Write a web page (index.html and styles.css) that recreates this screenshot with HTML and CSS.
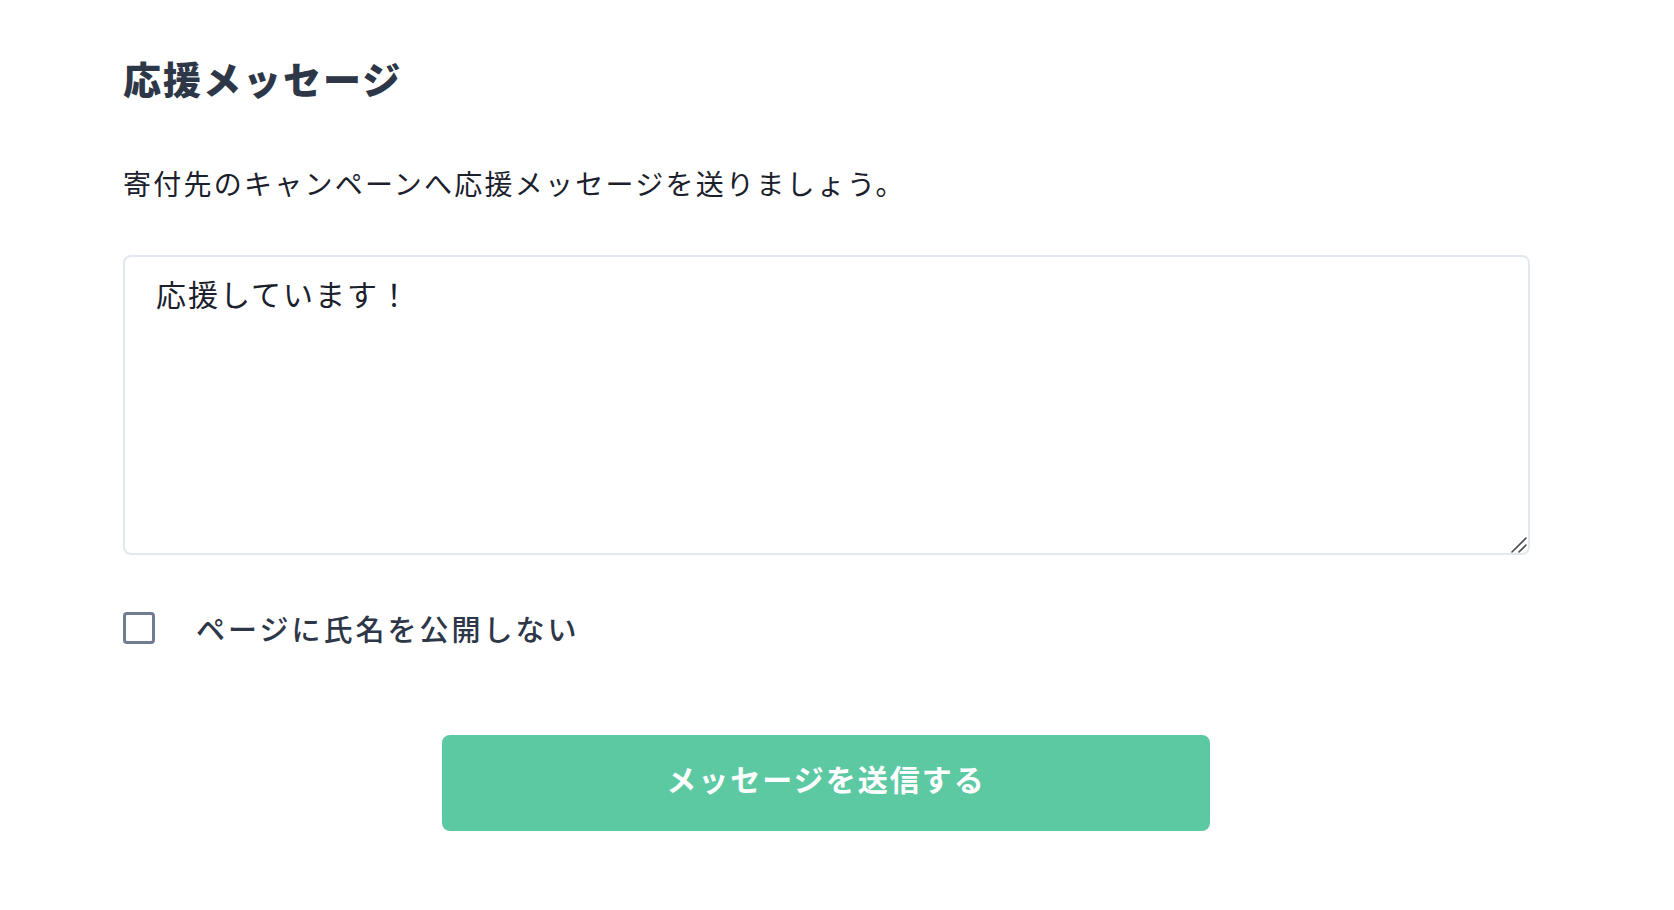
FILE: index.html
```html
<!DOCTYPE html>
<html lang="ja">
<head>
<meta charset="utf-8">
<title>応援メッセージ</title>
<link rel="stylesheet" href="styles.css">
</head>
<body>
<main class="page">
  <h1 class="title">応援メッセージ</h1>
  <p class="lead">寄付先のキャンペーンへ応援メッセージを送りましょう。</p>
  <div class="field">
    <textarea class="message">応援しています！</textarea>
    <svg class="grip" width="18" height="18" viewBox="0 0 18 18" aria-hidden="true">
      <line x1="3" y1="17" x2="17" y2="3" stroke="#4a4a4a" stroke-width="1.6" stroke-linecap="round"/>
      <line x1="10" y1="17" x2="17" y2="10" stroke="#4a4a4a" stroke-width="1.6" stroke-linecap="round"/>
    </svg>
  </div>
  <label class="check-row">
    <input type="checkbox" class="check">
    <span class="check-label">ページに氏名を公開しない</span>
  </label>
  <button class="submit" type="button">メッセージを送信する</button>
</main>
</body>
</html>
```

FILE: styles.css
```css
html, body {
  margin: 0;
  padding: 0;
  background: #ffffff;
}

body {
  font-family: "Noto Sans CJK JP", "Noto Sans", sans-serif;
  color: #1a202c;
}

.page {
  width: 1407px;
  padding: 55px 0 0 123px;
  display: flex;
  flex-direction: column;
  align-items: flex-start;
}

.title {
  margin: 0;
  font-size: 38px;
  line-height: 46px;
  font-weight: 900;
  letter-spacing: 2px;
  color: #2d3748;
}

.lead {
  margin: 62px 0 0;
  font-size: 28px;
  line-height: 40px;
  letter-spacing: 2.25px;
  color: #1a202c;
}

.field {
  position: relative;
  margin: 52px 0 0;
  width: 1407px;
  height: 300px;
}

.message {
  box-sizing: border-box;
  display: block;
  margin: 0;
  width: 100%;
  height: 100%;
  padding: 14px 31px;
  border: 2px solid #e2e8f0;
  border-radius: 8px;
  font-family: "Noto Sans CJK JP", "Noto Sans", sans-serif;
  font-size: 30px;
  line-height: 45px;
  letter-spacing: 2px;
  color: #1a202c;
  outline: none;
  resize: none;
}

.grip {
  position: absolute;
  right: 3px;
  bottom: 2px;
  pointer-events: none;
}

.check-row {
  margin-top: 53px;
  display: flex;
  align-items: center;
  gap: 41px;
  cursor: pointer;
}

.check {
  appearance: none;
  -webkit-appearance: none;
  box-sizing: border-box;
  margin: 0;
  width: 32px;
  height: 32px;
  border: 3px solid #6f7d92;
  border-radius: 4px;
  background: #ffffff;
}

.check-label {
  font-size: 29px;
  line-height: 40px;
  font-weight: 500;
  letter-spacing: 3px;
  color: #2d3748;
}

.submit {
  box-sizing: border-box;
  margin: 87px 0 0 319px;
  width: 768px;
  height: 96px;
  padding: 0 0 10px;
  border: none;
  border-radius: 8px;
  background: #5cc9a2;
  color: #ffffff;
  font-family: "Noto Sans CJK JP", "Noto Sans", sans-serif;
  font-size: 30px;
  line-height: 86px;
  font-weight: 700;
  letter-spacing: 2px;
  cursor: pointer;
}
```
